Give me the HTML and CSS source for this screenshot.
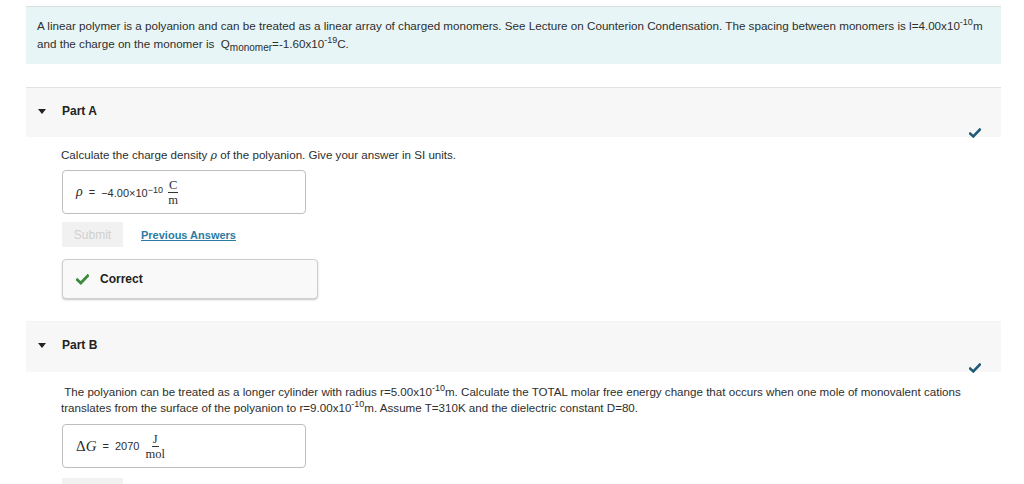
FILE: index.html
```html
<!DOCTYPE html>
<html>
<head>
<meta charset="utf-8">
<link rel="stylesheet" href="styles.css">
</head>
<body>
<div class="page">
  <div class="intro">
    <p>A linear polymer is a polyanion and can be treated as a linear array of charged monomers. See Lecture on Counterion Condensation. The spacing between monomers is <span class="nw">l=4.00x10<sup>-10</sup>m</span><br>and the charge on the monomer is &nbsp;Q<sub>monomer</sub>=-1.60x10<sup>-19</sup>C.</p>
  </div>

  <section class="part">
    <div class="part-head">
      <span class="tri"></span>
      <span class="part-title">Part A</span>
      <svg class="done" width="12" height="10" viewBox="0 0 12 10"><path d="M1.2 5.6 L4.3 8.4 L10.8 1.6" fill="none" stroke="#1f5a78" stroke-width="2.6" stroke-linecap="square"/></svg>
    </div>
    <div class="part-body">
      <p class="q">Calculate the charge density <span class="rho-s">ρ</span> of the polyanion. Give your answer in SI units.</p>
      <div class="answer">
        <span class="mvar">ρ</span><span class="eq">=</span><span class="num">−4.00×10<sup>−10</sup></span>
        <span class="frac"><span class="top">C</span><span class="bot">m</span></span>
      </div>
      <div class="actions">
        <span class="submit">Submit</span>
        <a class="prev" href="#">Previous Answers</a>
      </div>
      <div class="correct">
        <svg width="13" height="11" viewBox="0 0 13 11"><path d="M1.3 5.8 L4.8 9 L11.7 1.8" fill="none" stroke="#3b8a3e" stroke-width="2.8" stroke-linecap="square"/></svg>
        <span>Correct</span>
      </div>
    </div>
  </section>

  <section class="part partb">
    <div class="part-head">
      <span class="tri"></span>
      <span class="part-title">Part B</span>
      <svg class="done" width="12" height="10" viewBox="0 0 12 10"><path d="M1.2 5.6 L4.3 8.4 L10.8 1.6" fill="none" stroke="#1f5a78" stroke-width="2.6" stroke-linecap="square"/></svg>
    </div>
    <div class="part-body">
      <p class="q qb">&nbsp;The polyanion can be treated as a longer cylinder with radius r=5.00x10<sup>-10</sup>m. Calculate the TOTAL molar free energy change that occurs when one mole of monovalent cations<br>translates from the surface of the polyanion to r=9.00x10<sup>-10</sup>m. Assume T=310K and the dielectric constant D=80.</p>
      <div class="answer answer-b">
        <span class="mvar up">Δ<i>G</i></span><span class="eq">=</span><span class="num">2070</span>
        <span class="frac big"><span class="top">J</span><span class="bot">mol</span></span>
      </div>
      <div class="actions">
        <span class="submit"></span>
      </div>
    </div>
  </section>
</div>
</body>
</html>
```

FILE: styles.css
```css
html, body {
  margin: 0;
  padding: 0;
  background: #fff;
}
body {
  font-family: "Liberation Sans", Arial, Helvetica, sans-serif;
  font-size: 12px;
  color: #2e2e2e;
}
.page {
  width: 975px;
  margin-left: 26px;
  padding-top: 6px;
}
p { margin: 0; }
sup { font-size: 9px; vertical-align: 5px; line-height: 1; }
sub { font-size: 10px; vertical-align: -3px; line-height: 1; }
.nw { white-space: nowrap; }

.intro {
  background: #e8f5f6;
  border-top: 1px solid #dcdfe0;
  padding: 10px 4px 11px 11px;
  line-height: 18px;
  font-size: 11.65px;
  white-space: nowrap;
  overflow: hidden;
}

.part { margin-top: 23px; }
.partb { margin-top: 22px; }
.part-head {
  position: relative;
  background: #f7f7f7;
  border-top: 1px solid #e2e2e2;
  display: flex;
  align-items: flex-start;
  padding-top: 15px;
  box-sizing: border-box;
  height: 50px;
}
.partb .part-head { border-top-color: #f3f3f3; height: 51px; }
.tri {
  width: 0; height: 0;
  border-left: 4.5px solid transparent;
  border-right: 4.5px solid transparent;
  border-top: 5px solid #222;
  margin-left: 12px;
  margin-top: 6px;
}
.part-title {
  font-weight: bold;
  font-size: 12px;
  color: #222;
  margin-left: 16px;
  line-height: 17px;
}
.done {
  position: absolute;
  right: 20px;
  bottom: -1px;
}

.part-body { padding-left: 35px; }
.q {
  margin-top: 10px;
  line-height: 16px;
  font-size: 11.6px;
}
.qb { margin-top: 12px; }
.rho-s { font-family: "DejaVu Serif", serif; font-style: italic; font-size: 11px; }

.answer {
  margin-top: 6px;
  margin-left: 1px;
  width: 244px;
  height: 44px;
  border: 1px solid #bdbdbd;
  border-radius: 4px;
  display: flex;
  align-items: center;
  padding-left: 13px;
  box-sizing: border-box;
}
.answer-b { margin-top: 8px; }
.mvar {
  font-family: "Liberation Serif", "Times New Roman", serif;
  font-style: italic;
  font-size: 14px;
}
.mvar.up { font-style: normal; font-size: 15px; }
.mvar.up i { font-style: italic; }
.eq { margin: 0 6px; font-size: 11px; }
.num { font-size: 11px; }
.num sup { font-size: 9px; vertical-align: 4px; }
.frac {
  display: inline-flex;
  flex-direction: column;
  align-items: center;
  margin-left: 5px;
  font-family: "Liberation Serif", "Times New Roman", serif;
  font-size: 12.5px;
  line-height: 12px;
}
.frac .top { border-bottom: 1px solid #333; padding: 0 1px 1px; }
.frac .bot { padding-top: 1px; }
.frac.big { margin-left: 6px; }

.actions {
  margin-top: 8px;
  margin-left: 1px;
  display: flex;
  align-items: center;
}
.submit {
  display: inline-block;
  width: 61px;
  height: 25px;
  line-height: 26px;
  text-align: center;
  background: #f1f1f1;
  color: #d0d0d0;
  font-size: 12px;
}
.prev {
  margin-left: 18px;
  font-size: 11px;
  font-weight: bold;
  color: #2c7ba1;
  text-decoration: underline;
}
.partb .actions { margin-top: 10px; }

.correct {
  margin-top: 12px;
  margin-left: 1px;
  width: 256px;
  height: 40px;
  border: 1px solid #cfcfcf;
  border-radius: 4px;
  background: #f9f9f9;
  box-shadow: 0 1px 2px rgba(0,0,0,0.22);
  display: flex;
  align-items: center;
  padding-left: 13px;
  box-sizing: border-box;
}
.correct span {
  margin-left: 11px;
  font-weight: bold;
  font-size: 12px;
  color: #222;
}
```
